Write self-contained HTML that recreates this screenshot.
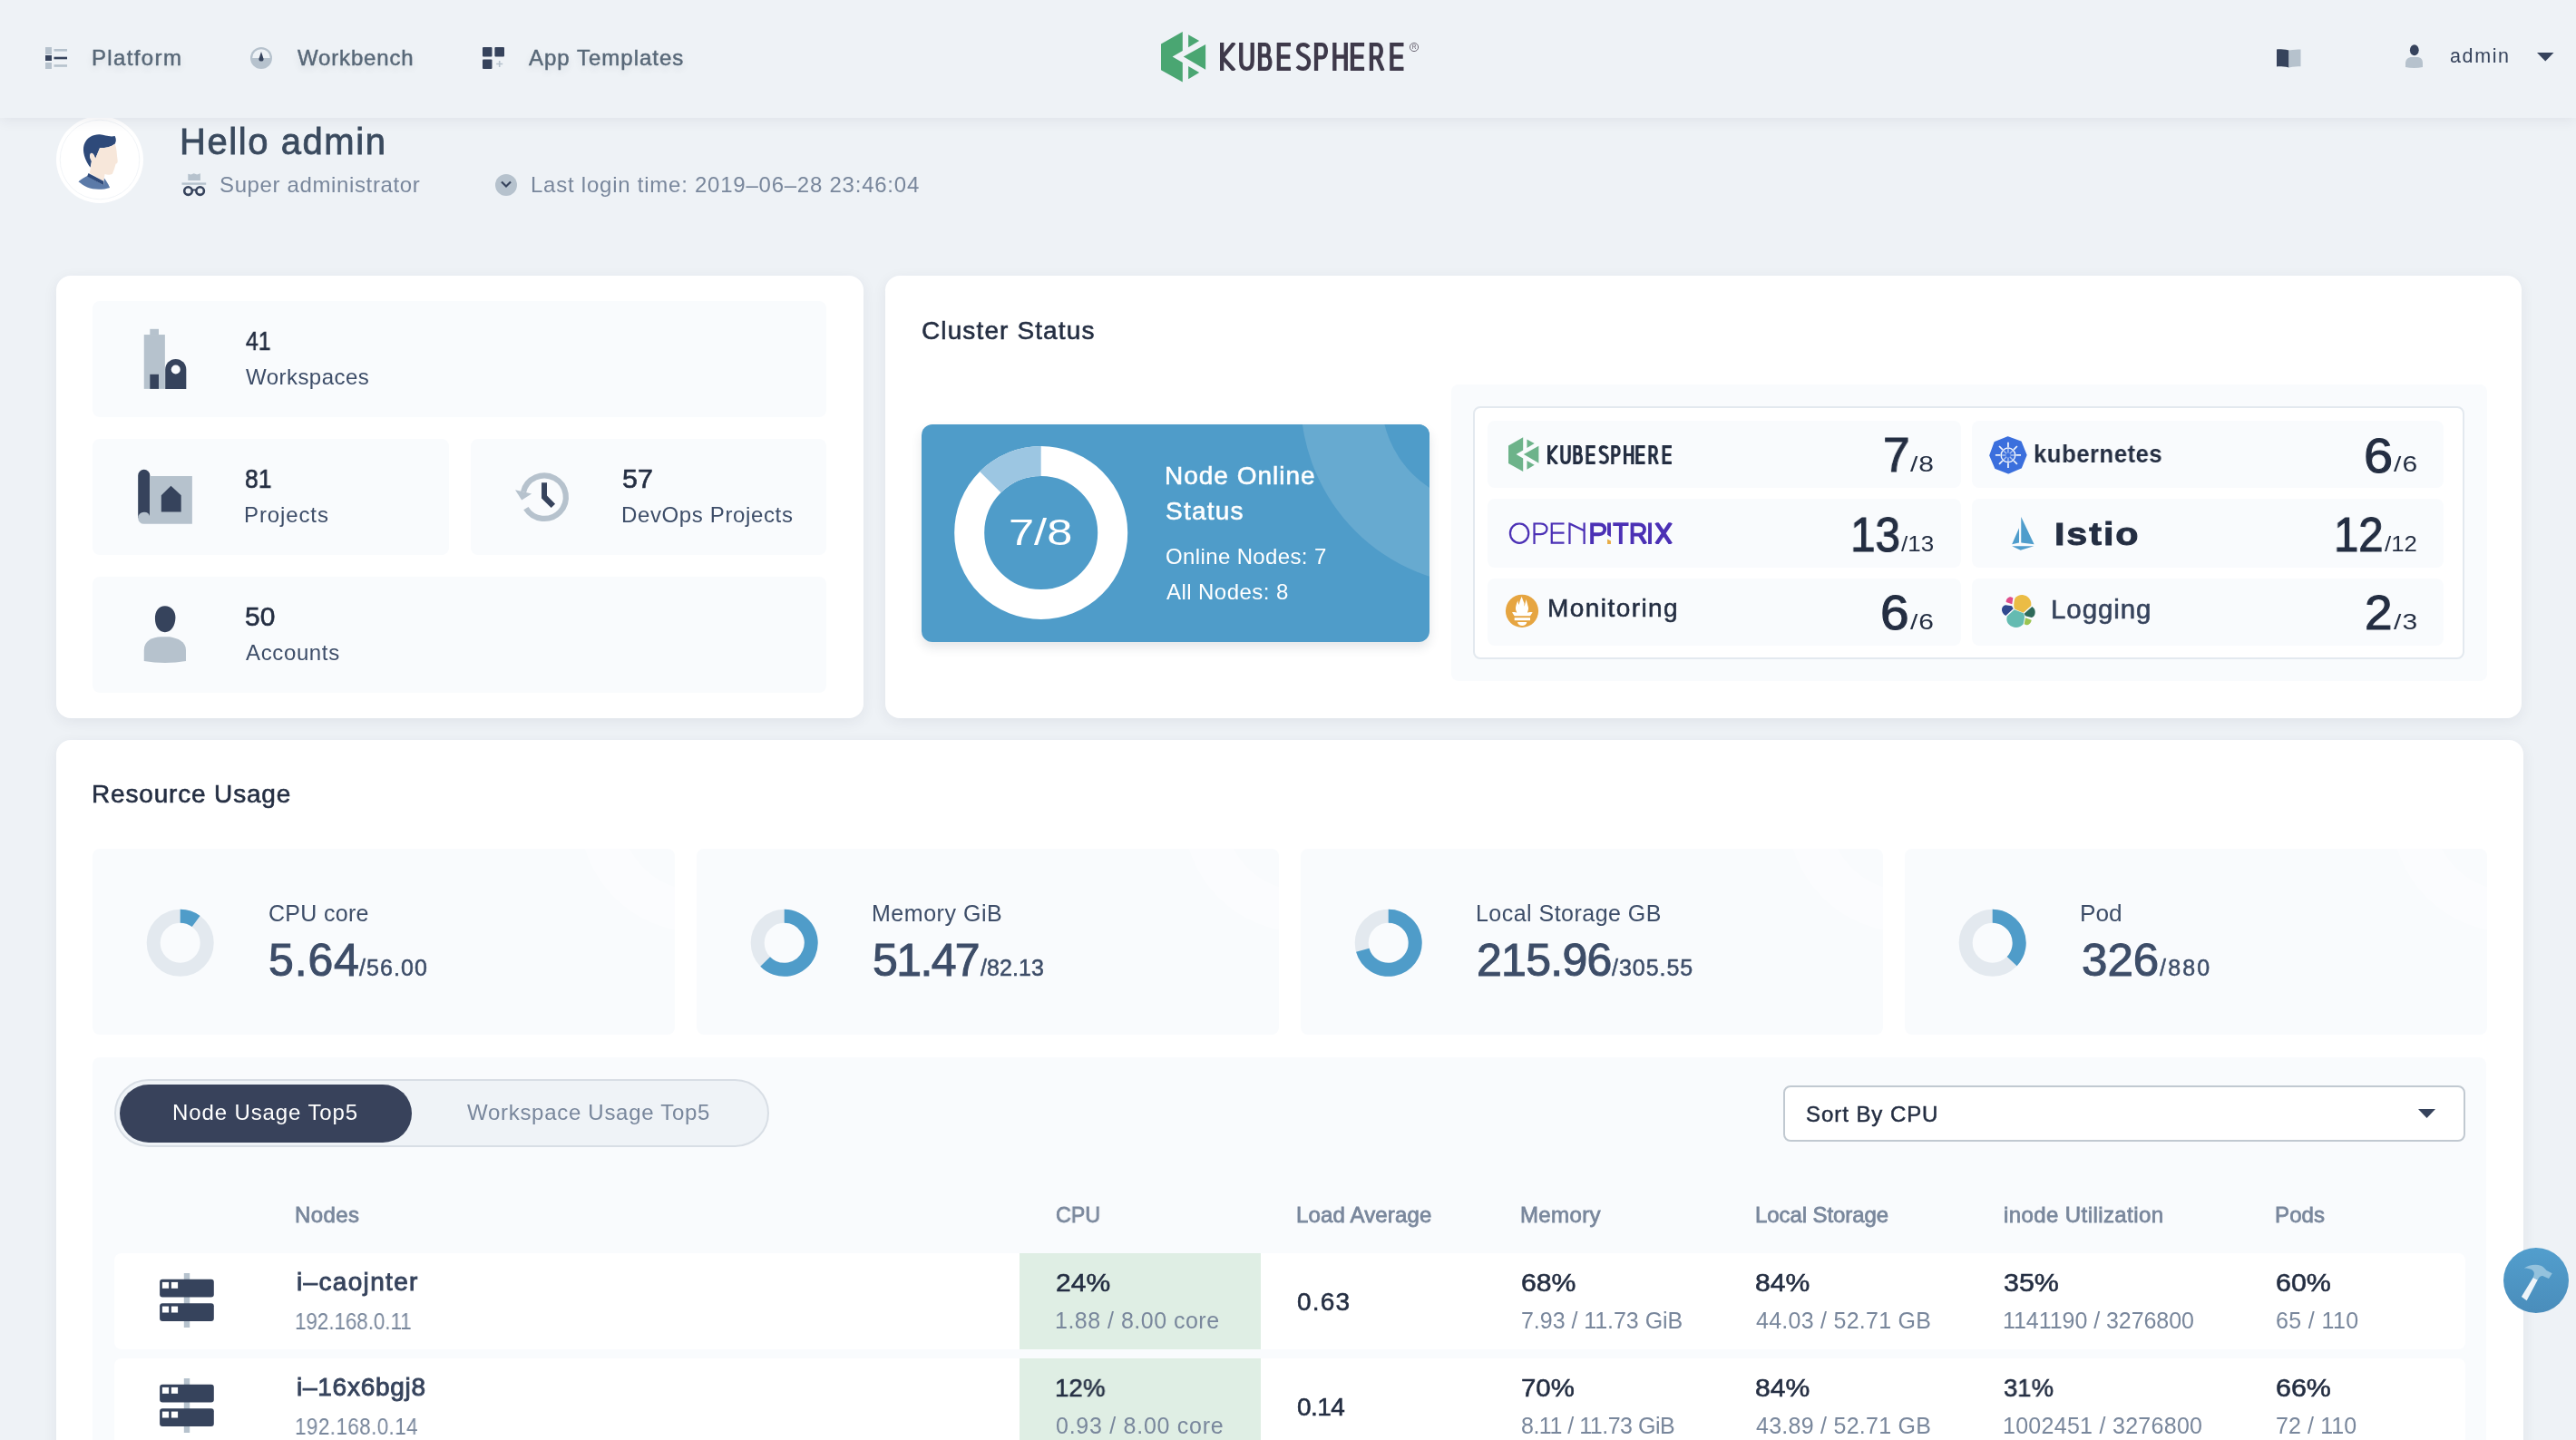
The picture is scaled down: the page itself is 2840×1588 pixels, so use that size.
<!DOCTYPE html>
<html><head><meta charset="utf-8"><style>
html,body{margin:0;padding:0;}
body{width:2840px;height:1588px;overflow:hidden;position:relative;background:#eef2f6;font-family:"Liberation Sans", sans-serif;}
.t{position:absolute;white-space:nowrap;line-height:1;font-family:"Liberation Sans", sans-serif;will-change:transform;}
svg{display:block}
</style></head><body>
<div style="position:absolute;left:0px;top:0px;width:2840px;height:130px;background:#eef2f6;box-shadow:0 3px 14px rgba(36,46,66,0.07);z-index:5"></div>
<svg style="position:absolute;left:50px;top:52px;z-index:6" width="24" height="24" viewBox="0 0 24 24"><rect x="0" y="0" width="7" height="8" fill="#b6c2cd"/><rect x="0" y="9" width="7" height="6" fill="#36435c"/><rect x="0" y="17" width="7" height="7" fill="#b6c2cd"/><rect x="9.5" y="2" width="14.5" height="2.6" fill="#b6c2cd"/><rect x="9.5" y="10.7" width="14.5" height="2.6" fill="#36435c"/><rect x="9.5" y="19.2" width="14.5" height="2.6" fill="#b6c2cd"/></svg>
<div class="t" style="left:100.8px;top:51.5px;font-size:24px;color:#586878;-webkit-text-stroke:0.48px #586878;letter-spacing:1.36px;text-shadow:0 4px 8px rgba(36,46,66,0.12);z-index:6;">Platform</div>
<svg style="position:absolute;left:276px;top:52px;z-index:6" width="24" height="24" viewBox="0 0 24 24"><circle cx="12" cy="12" r="12" fill="#b6c2cd"/><path d="M2.2,12 A9.8,9.8 0 0 1 21.8,12 Z" fill="#eef2f6"/><path d="M12,5 L14.6,12.9 A2.6,2.6 0 1 1 9.4,12.9 Z" fill="#36435c"/></svg>
<div class="t" style="left:327.5px;top:51.5px;font-size:24px;color:#586878;-webkit-text-stroke:0.48px #586878;letter-spacing:0.84px;text-shadow:0 4px 8px rgba(36,46,66,0.12);z-index:6;">Workbench</div>
<svg style="position:absolute;left:532px;top:52px;z-index:6" width="24" height="24" viewBox="0 0 24 24"><rect x="0" y="0" width="10.5" height="10.5" rx="1" fill="#36435c"/><rect x="13.4" y="0" width="10.6" height="10.5" rx="1" fill="#36435c"/><rect x="0" y="13.4" width="10.5" height="10.6" rx="1" fill="#36435c"/><path d="M18.7,15 V22 M15.2,18.5 H22.2" stroke="#b6c2cd" stroke-width="1.6"/></svg>
<div class="t" style="left:583.4px;top:51.5px;font-size:24px;color:#586878;-webkit-text-stroke:0.48px #586878;letter-spacing:1.00px;text-shadow:0 4px 8px rgba(36,46,66,0.12);z-index:6;">App Templates</div>
<svg style="position:absolute;left:1279.9px;top:34.7px;z-index:6" width="50" height="56" viewBox="0 0 50 56"><path d="M23.8,0 L0,13.6 L0,42.2 L23.8,55.5 L23.8,34.1 L12.6,27.5 L23.8,21.1 Z" fill="#4aa672"/><path d="M49.1,13.9 L49.1,41.8 L24.8,27.5 Z" fill="#4aa672"/><path d="M30.1,3.3 L42.2,10.1 L30.1,17.3 Z" fill="#4aa672"/><path d="M30.1,38.1 L42.2,44.9 L30.1,52.3 Z" fill="#4aa672"/></svg>
<svg style="position:absolute;left:1345px;top:46.7px;z-index:6" width="210" height="31" viewBox="0 0 210 31"><path transform="translate(0,0)" d="M2.15,0 V31 M15.8,0 L2.75,16.2 L15.8,31" fill="none" stroke="#3e394a" stroke-width="4.3"/><path transform="translate(21.1,0)" d="M2.15,0 V20.5 C2.15,26 4.5,28.85 8.4,28.85 C12.3,28.85 14.6,26 14.6,20.5 V0" fill="none" stroke="#3e394a" stroke-width="4.3"/><path transform="translate(41.9,0)" d="M2.15,2.15 H8.2 C13.2,2.15 13.2,14.3 8.2,14.3 H2.15 M8.2,14.3 C15.2,14.3 15.2,28.85 8.6,28.85 H2.15 M2.15,0 V31" fill="none" stroke="#3e394a" stroke-width="4.3"/><path transform="translate(62.7,0)" d="M15.3,2.15 H2.15 V28.85 H15.3 M2.15,15.5 H14.5" fill="none" stroke="#3e394a" stroke-width="4.3"/><path transform="translate(83.4,0)" d="M14.3,5.2 C12.8,3 10.8,2.15 8.4,2.15 C4.8,2.15 2.7,4.3 2.7,7.6 C2.7,11.4 5.8,12.8 8.6,14 C12,15.5 14.7,17.3 14.7,21.6 C14.7,26.2 11.6,28.85 8.4,28.85 C5.4,28.85 3.2,27.8 1.8,26" fill="none" stroke="#3e394a" stroke-width="4.3"/><path transform="translate(103.9,0)" d="M2.15,31 V2.15 H8.3 C14.6,2.15 14.6,16.4 8.3,16.4 H2.15" fill="none" stroke="#3e394a" stroke-width="4.3"/><path transform="translate(124.2,0)" d="M2.15,0 V31 M14.6,0 V31 M2.15,15.5 H14.6" fill="none" stroke="#3e394a" stroke-width="4.3"/><path transform="translate(143.8,0)" d="M15.3,2.15 H2.15 V28.85 H15.3 M2.15,15.5 H14.5" fill="none" stroke="#3e394a" stroke-width="4.3"/><path transform="translate(164.8,0)" d="M2.15,31 V2.15 H8.3 C14.6,2.15 14.6,16.4 8.3,16.4 H2.15 M8.6,16.4 L14.8,31" fill="none" stroke="#3e394a" stroke-width="4.3"/><path transform="translate(187.2,0)" d="M15.3,2.15 H2.15 V28.85 H15.3 M2.15,15.5 H14.5" fill="none" stroke="#3e394a" stroke-width="4.3"/></svg>
<svg style="position:absolute;left:1553px;top:46px;z-index:6" width="12" height="12" viewBox="0 0 12 12"><circle cx="6" cy="6" r="4.6" fill="none" stroke="#5d5866" stroke-width="0.9"/><text x="6" y="8.3" font-size="6.5" text-anchor="middle" fill="#5d5866" font-family="Liberation Sans">R</text></svg>
<svg style="position:absolute;left:2510px;top:54px;z-index:6" width="28" height="21" viewBox="0 0 28 21"><path d="M0,0.5 C3,0.2 7,0.4 13.5,1.5 V20.5 C7,19.3 3,19.2 0,19.5 Z" fill="#36435c"/><path d="M13.5,1.5 C19,0.8 23,0.6 26.5,0.6 V19.2 C23,19.2 19,19.3 13.5,20.5 Z" fill="#b6c2cd"/></svg>
<svg style="position:absolute;left:2652px;top:49px;z-index:6" width="20" height="26" viewBox="0 0 20 26"><ellipse cx="9.8" cy="6.2" rx="4.9" ry="6" fill="#36435c"/><path d="M0,21 C0,16.5 3,14 7,14 H12.5 C17,14 19,16.5 19,21 V25 C13,26.2 6,26.2 0,25 Z" fill="#b6c2cd"/></svg>
<div class="t" style="left:2701.0px;top:51.9px;font-size:21.5px;color:#36435c;letter-spacing:1.62px;z-index:6;">admin</div>
<svg style="position:absolute;left:2797px;top:57.5px;z-index:6" width="19" height="10" viewBox="0 0 19 10"><path d="M0,0 H18.5 L9.25,9.5 Z" fill="#36435c"/></svg>
<div style="position:absolute;left:62px;top:128px;width:96px;height:96px;border-radius:50%;background:#fff"></div>
<svg style="position:absolute;left:62px;top:128px;" width="96" height="96" viewBox="0 0 96 96"><circle cx="48" cy="48" r="43.8" fill="none" stroke="#eef1f5" stroke-width="0.8"/></svg>
<svg style="position:absolute;left:60px;top:125px;" width="100" height="100" viewBox="0 0 1440 1440"><path d="M570,860 C480,740 440,600 470,500 C510,380 620,330 720,335 C800,340 870,380 960,360 C985,410 980,450 960,485 C900,530 820,550 720,550 L650,720 C620,640 590,610 570,640 C550,680 570,720 590,760 Z" fill="#2e4a7a"/><path d="M720,550 C820,550 900,530 960,485 C990,560 985,600 1000,720 C1010,780 1000,795 975,800 C960,850 950,900 920,960 C880,985 830,975 800,965 L780,1080 L560,950 L590,760 C570,720 555,680 575,640 C595,610 630,640 650,720 Z" fill="#f7e7da"/><path d="M380,1085 C440,1040 490,1010 520,995 L780,1140 L790,1030 C830,1080 870,1150 880,1180 C760,1220 620,1215 520,1175 C460,1145 420,1115 380,1085 Z" fill="#5b7aa8"/><path d="M540,950 L780,1075 L780,1140 L520,1000 Z" fill="#2e4a7a"/></svg>
<div class="t" style="left:197.5px;top:136.0px;font-size:40px;color:#3a4a5e;-webkit-text-stroke:0.80px #3a4a5e;letter-spacing:1.57px;">Hello admin</div>
<svg style="position:absolute;left:200px;top:190px;" width="28" height="27" viewBox="0 0 28 27"><path d="M7.3,1.8 L10.5,2.6 L13.8,1.2 L17.2,2.6 L20.9,1.2 V9.1 H7.3 Z" fill="#b6c2cd"/><rect x="0.5" y="11.4" width="26.7" height="2.4" fill="#b6c2cd"/><circle cx="7.5" cy="20.6" r="4.3" fill="none" stroke="#36435c" stroke-width="2.6"/><circle cx="20.6" cy="20.6" r="4.3" fill="none" stroke="#36435c" stroke-width="2.6"/><path d="M11.5,19.5 H16.5" stroke="#36435c" stroke-width="2"/></svg>
<div class="t" style="left:241.9px;top:191.6px;font-size:24px;color:#79879c;letter-spacing:0.63px;">Super administrator</div>
<svg style="position:absolute;left:546px;top:192px;" width="24" height="24" viewBox="0 0 24 24"><circle cx="12" cy="12" r="12" fill="#b6c2cd"/><path d="M7,8.5 L12,13.5 L17,8.5" fill="none" stroke="#36435c" stroke-width="2.2"/></svg>
<div class="t" style="left:585.0px;top:191.6px;font-size:24px;color:#79879c;letter-spacing:0.76px;">Last login time: 2019–06–28 23:46:04</div>
<div style="position:absolute;left:62px;top:304px;width:890px;height:488px;background:#fff;border-radius:16px;box-shadow:0 4px 16px rgba(36,46,66,0.07)"></div>
<div style="position:absolute;left:102px;top:332px;width:809px;height:128px;background:#f9fbfd;border-radius:8px"></div>
<div style="position:absolute;left:102px;top:484px;width:393px;height:128px;background:#f9fbfd;border-radius:8px"></div>
<div style="position:absolute;left:519px;top:484px;width:392px;height:128px;background:#f9fbfd;border-radius:8px"></div>
<div style="position:absolute;left:102px;top:636px;width:809px;height:128px;background:#f9fbfd;border-radius:8px"></div>
<svg style="position:absolute;left:140px;top:350px;" width="90" height="90" viewBox="0 0 1440 1440"><rect x="300" y="305" width="370" height="957" fill="#b6c2cd"/><rect x="405" y="205" width="155" height="110" fill="#b6c2cd"/><rect x="405" y="1005" width="155" height="257" fill="#36435c"/><path d="M675,1262 V920 A185,185 0 0 1 1045,920 V1262 Z" fill="#36435c"/><circle cx="860" cy="920" r="80" fill="#f9fbfd"/></svg>
<svg style="position:absolute;left:140px;top:505px;" width="90" height="90" viewBox="0 0 1440 1440"><path d="M195,310 A105,105 0 0 1 405,310 V1060 H195 Z" fill="#36435c"/><path d="M400,320 H1150 V1165 H300 A105,105 0 0 1 300,955 A105,105 0 0 1 405,1040 V320 Z" fill="#b6c2cd"/><path d="M605,660 L775,490 L955,660 V950 H605 Z" fill="#36435c"/></svg>
<svg style="position:absolute;left:553px;top:505px;" width="90" height="90" viewBox="0 0 1440 1440"><path d="M385,600 A380,380 0 1 1 430,890" fill="none" stroke="#b6c2cd" stroke-width="100"/><path d="M240,565 L530,630 L355,745 Z" fill="#b6c2cd"/><path d="M705,435 H800 V665 L945,810 L875,880 L705,710 Z" fill="#36435c"/></svg>
<svg style="position:absolute;left:140px;top:655px;" width="90" height="90" viewBox="0 0 1440 1440"><path d="M670,210 C780,210 860,300 855,420 C850,560 780,675 670,675 C560,675 495,560 495,440 C490,300 560,210 670,210 Z" fill="#36435c"/><path d="M300,990 C300,820 450,760 600,755 H750 C900,780 1040,840 1040,990 V1185 C800,1225 540,1225 300,1185 Z" fill="#b6c2cd"/></svg>
<div class="t" style="left:270.5px;top:361.7px;font-size:29px;color:#242e42;-webkit-text-stroke:0.58px #242e42;transform:scaleX(0.852);transform-origin:0 0;">41</div>
<div class="t" style="left:270.5px;top:403.6px;font-size:24px;color:#3d4d68;letter-spacing:0.46px;">Workspaces</div>
<div class="t" style="left:269.6px;top:513.6px;font-size:29px;color:#242e42;-webkit-text-stroke:0.58px #242e42;transform:scaleX(0.913);transform-origin:0 0;">81</div>
<div class="t" style="left:268.5px;top:555.6px;font-size:24px;color:#3d4d68;letter-spacing:0.89px;">Projects</div>
<div class="t" style="left:686.1px;top:513.6px;font-size:29px;color:#242e42;-webkit-text-stroke:0.58px #242e42;transform:scaleX(1.050);transform-origin:0 0;">57</div>
<div class="t" style="left:685.1px;top:555.6px;font-size:24px;color:#3d4d68;letter-spacing:0.63px;">DevOps Projects</div>
<div class="t" style="left:269.5px;top:665.6px;font-size:29px;color:#242e42;-webkit-text-stroke:0.58px #242e42;transform:scaleX(1.032);transform-origin:0 0;">50</div>
<div class="t" style="left:270.5px;top:707.6px;font-size:24px;color:#3d4d68;letter-spacing:0.63px;">Accounts</div>
<div style="position:absolute;left:976px;top:304px;width:1804px;height:488px;background:#fff;border-radius:16px;box-shadow:0 4px 16px rgba(36,46,66,0.07)"></div>
<div class="t" style="left:1016.4px;top:351.2px;font-size:28px;color:#242e42;-webkit-text-stroke:0.56px #242e42;letter-spacing:1.12px;">Cluster Status</div>
<div style="position:absolute;left:1016px;top:468px;width:560px;height:240px;border-radius:12px;background:#4f9cc9;overflow:hidden;box-shadow:0 6px 12px rgba(36,46,66,0.12)"><div style="position:absolute;left:418px;top:-234px;width:412px;height:412px;border-radius:50%;background:rgba(255,255,255,0.14)"></div><div style="position:absolute;left:507px;top:-145px;width:234px;height:234px;border-radius:50%;background:#4f9cc9"></div></div>
<svg style="position:absolute;left:1016px;top:468px;" width="560" height="240" viewBox="0 0 560 240"><circle cx="131.7" cy="119.5" r="79" fill="none" stroke="#fff" stroke-width="33"/><path d="M131.7,40.5 A79,79 0 0 0 75.8,63.6" fill="none" stroke="#9cc6e2" stroke-width="33"/></svg>
<div class="t" style="left:1112.2px;top:566.8px;font-size:41px;color:#fff;transform:scaleX(1.232);transform-origin:0 0;">7/8</div>
<div class="t" style="left:1283.8px;top:510.5px;font-size:28px;color:#fff;-webkit-text-stroke:0.56px #fff;letter-spacing:0.99px;">Node Online</div>
<div class="t" style="left:1284.8px;top:549.5px;font-size:28px;color:#fff;-webkit-text-stroke:0.56px #fff;letter-spacing:1.24px;">Status</div>
<div class="t" style="left:1284.8px;top:601.6px;font-size:24px;color:#fff;letter-spacing:0.37px;">Online Nodes: 7</div>
<div class="t" style="left:1285.8px;top:641.4px;font-size:24px;color:#fff;letter-spacing:0.44px;">All Nodes: 8</div>
<div style="position:absolute;left:1600px;top:424px;width:1142px;height:327px;background:#f9fbfd;border-radius:8px"></div>
<div style="position:absolute;left:1624px;top:448px;width:1093px;height:279px;background:#fff;border:2px solid #e3e9ef;border-radius:8px;box-sizing:border-box"></div>
<div style="position:absolute;left:1640px;top:464px;width:522px;height:74px;background:#f9fbfd;border-radius:8px"></div>
<div style="position:absolute;left:2174px;top:464px;width:520px;height:74px;background:#f9fbfd;border-radius:8px"></div>
<div style="position:absolute;left:1640px;top:550px;width:522px;height:76px;background:#f9fbfd;border-radius:8px"></div>
<div style="position:absolute;left:2174px;top:550px;width:520px;height:76px;background:#f9fbfd;border-radius:8px"></div>
<div style="position:absolute;left:1640px;top:638px;width:522px;height:74px;background:#f9fbfd;border-radius:8px"></div>
<div style="position:absolute;left:2174px;top:638px;width:520px;height:74px;background:#f9fbfd;border-radius:8px"></div>
<div class="t" style="left:2075.7px;top:474.4px;font-size:54px;color:#242e42;-webkit-text-stroke:1.08px #242e42;transform:scaleX(0.985);transform-origin:0 0;">7</div>
<div class="t" style="left:2106.0px;top:499.9px;font-size:24px;color:#242e42;letter-spacing:0.76px;transform:scaleX(1.250);transform-origin:0 0;">/8</div>
<div class="t" style="left:2040.2px;top:562.1px;font-size:54px;color:#242e42;-webkit-text-stroke:1.08px #242e42;transform:scaleX(0.917);transform-origin:0 0;">13</div>
<div class="t" style="left:2096.0px;top:587.6px;font-size:24px;color:#242e42;transform:scaleX(1.084);transform-origin:0 0;">/13</div>
<div class="t" style="left:2073.4px;top:648.1px;font-size:54px;color:#242e42;-webkit-text-stroke:1.08px #242e42;transform:scaleX(1.054);transform-origin:0 0;">6</div>
<div class="t" style="left:2106.0px;top:673.6px;font-size:24px;color:#242e42;letter-spacing:0.76px;transform:scaleX(1.250);transform-origin:0 0;">/6</div>
<div class="t" style="left:2605.6px;top:474.8px;font-size:54px;color:#242e42;-webkit-text-stroke:1.08px #242e42;transform:scaleX(1.069);transform-origin:0 0;">6</div>
<div class="t" style="left:2638.5px;top:500.3px;font-size:24px;color:#242e42;letter-spacing:0.84px;transform:scaleX(1.250);transform-origin:0 0;">/6</div>
<div class="t" style="left:2572.9px;top:562.1px;font-size:54px;color:#242e42;-webkit-text-stroke:1.08px #242e42;transform:scaleX(0.909);transform-origin:0 0;">12</div>
<div class="t" style="left:2629.0px;top:587.6px;font-size:24px;color:#242e42;transform:scaleX(1.072);transform-origin:0 0;">/12</div>
<div class="t" style="left:2607.0px;top:648.1px;font-size:54px;color:#242e42;-webkit-text-stroke:1.08px #242e42;transform:scaleX(1.019);transform-origin:0 0;">2</div>
<div class="t" style="left:2638.5px;top:673.6px;font-size:24px;color:#242e42;letter-spacing:0.84px;transform:scaleX(1.250);transform-origin:0 0;">/3</div>
<svg style="position:absolute;left:1663px;top:482px;" width="34" height="38.5" viewBox="0 0 50 56"><path d="M23.8,0 L0,13.6 L0,42.2 L23.8,55.5 L23.8,34.1 L12.6,27.5 L23.8,21.1 Z" fill="#6db38a"/><path d="M49.1,13.9 L49.1,41.8 L24.8,27.5 Z" fill="#6db38a"/><path d="M30.1,3.3 L42.2,10.1 L30.1,17.3 Z" fill="#6db38a"/><path d="M30.1,38.1 L42.2,44.9 L30.1,52.3 Z" fill="#6db38a"/></svg>
<svg style="position:absolute;left:1705.5px;top:491px;" width="142" height="21" viewBox="0 0 210 31"><path transform="translate(0,0)" d="M2.4,0 V31 M15.8,0 L3.0,16.2 L15.8,31" fill="none" stroke="#242e42" stroke-width="4.8"/><path transform="translate(21.1,0)" d="M2.4,0 V20.5 C2.4,26 4.5,28.6 8.4,28.6 C12.3,28.6 14.6,26 14.6,20.5 V0" fill="none" stroke="#242e42" stroke-width="4.8"/><path transform="translate(41.9,0)" d="M2.4,2.4 H8.2 C13.2,2.4 13.2,14.3 8.2,14.3 H2.4 M8.2,14.3 C15.2,14.3 15.2,28.6 8.6,28.6 H2.4 M2.4,0 V31" fill="none" stroke="#242e42" stroke-width="4.8"/><path transform="translate(62.7,0)" d="M15.3,2.4 H2.4 V28.6 H15.3 M2.4,15.5 H14.5" fill="none" stroke="#242e42" stroke-width="4.8"/><path transform="translate(83.4,0)" d="M14.3,5.2 C12.8,3 10.8,2.4 8.4,2.4 C4.8,2.4 2.7,4.3 2.7,7.6 C2.7,11.4 5.8,12.8 8.6,14 C12,15.5 14.7,17.3 14.7,21.6 C14.7,26.2 11.6,28.6 8.4,28.6 C5.4,28.6 3.2,27.8 1.8,26" fill="none" stroke="#242e42" stroke-width="4.8"/><path transform="translate(103.9,0)" d="M2.4,31 V2.4 H8.3 C14.6,2.4 14.6,16.4 8.3,16.4 H2.4" fill="none" stroke="#242e42" stroke-width="4.8"/><path transform="translate(124.2,0)" d="M2.4,0 V31 M14.6,0 V31 M2.4,15.5 H14.6" fill="none" stroke="#242e42" stroke-width="4.8"/><path transform="translate(143.8,0)" d="M15.3,2.4 H2.4 V28.6 H15.3 M2.4,15.5 H14.5" fill="none" stroke="#242e42" stroke-width="4.8"/><path transform="translate(164.8,0)" d="M2.4,31 V2.4 H8.3 C14.6,2.4 14.6,16.4 8.3,16.4 H2.4 M8.6,16.4 L14.8,31" fill="none" stroke="#242e42" stroke-width="4.8"/><path transform="translate(187.2,0)" d="M15.3,2.4 H2.4 V28.6 H15.3 M2.4,15.5 H14.5" fill="none" stroke="#242e42" stroke-width="4.8"/></svg>
<svg style="position:absolute;left:1655px;top:565px" width="200" height="45" viewBox="0 0 2576 580"><defs><clipPath id="opc"><rect x="0" y="145" width="2576" height="305"/></clipPath></defs><g clip-path="url(#opc)"><g fill="none" stroke="#4b30b5" stroke-width="29"><ellipse cx="258" cy="297" rx="131" ry="138"/><path d="M470,450 V160 H560 C620,160 650,200 650,235 C650,275 615,310 560,310 H470"/><path d="M895,160 H718 V433 H895 M718,293 H895"/><path d="M972,450 V160 L1180,262 M1180,145 V450"/></g><g fill="none" stroke="#4b30b5" stroke-width="50"><path d="M1290,450 V170 H1390 C1450,170 1472,205 1472,240 C1472,280 1442,312 1390,312 H1290"/><path d="M1588,168 H1810 M1698,145 V450"/><path d="M1862,450 V170 H1950 C2010,170 2036,205 2036,242 C2036,290 2000,318 1950,318 H1862"/><path d="M2113,145 V450"/></g><path d="M1960,300 L2050,450" stroke="#4b30b5" stroke-width="56"/><path d="M2205,145 L2410,450 M2410,145 L2205,450" stroke="#4b30b5" stroke-width="56"/><path d="M1508,145 H1558 V350 L1508,320 Z" fill="#4b30b5"/><path d="M1508,380 L1558,405 V450 H1508 Z" fill="#e8ac45"/></g></svg>
<svg style="position:absolute;left:1655px;top:650px;" width="45" height="48" viewBox="0 0 1350 1440"><circle cx="690" cy="715" r="543" fill="#e6a541"/><path d="M680,240 C700,300 730,380 760,440 C770,470 760,520 770,560 C790,500 800,420 830,330 C850,420 880,520 900,600 C910,660 880,720 870,770 C910,750 980,750 1040,760 L960,880 L440,880 L360,760 C420,750 480,750 520,770 C500,720 470,660 480,600 C490,520 530,430 550,370 C560,430 570,480 590,510 C600,430 640,330 680,240 Z" fill="#fff"/><rect x="440" y="935" width="520" height="90" fill="#fff"/><path d="M540,1080 H850 C840,1160 770,1200 695,1200 C620,1200 550,1160 540,1080 Z" fill="#fff"/></svg>
<div class="t" style="left:1706.0px;top:657.2px;font-size:28px;color:#242e42;-webkit-text-stroke:0.56px #242e42;letter-spacing:1.44px;">Monitoring</div>
<svg style="position:absolute;left:2185px;top:475px;" width="60" height="55" viewBox="0 0 1571 1440"><path d="M750,185 L1125,320 L1280,700 L1130,1070 L765,1225 L390,1080 L235,715 L375,330 Z" fill="#3b6fdd" stroke="#3b6fdd" stroke-width="40" stroke-linejoin="round"/><circle cx="758" cy="705" r="205" fill="none" stroke="#eef3fb" stroke-width="38"/><path d="M758,480 L758,337 M917,546 L1018,445 M983,705 L1126,705 M917,864 L1018,965 M758,930 L758,1073 M599,864 L498,965 M533,705 L390,705 M599,546 L498,445 " stroke="#eef3fb" stroke-width="46"/><path d="M758,640 L758,520 M804,659 L889,574 M823,705 L943,705 M804,751 L889,836 M758,770 L758,890 M712,751 L627,836 M693,705 L573,705 M712,659 L627,574 " stroke="#eef3fb" stroke-opacity="0.6" stroke-width="40"/></svg>
<div class="t" style="left:2241.8px;top:488.4px;font-size:27px;color:#242e42;font-weight:bold;letter-spacing:0.56px;transform:scaleX(0.950);transform-origin:0 0;">kubernetes</div>
<svg style="position:absolute;left:2210px;top:565px;" width="40" height="47" viewBox="0 0 1226 1440"><path d="M560,150 L1000,1080 L560,1030 Z" fill="#4f9dcc"/><path d="M490,530 L490,1030 L250,1080 Z" fill="#4f9dcc"/><path d="M250,1140 L990,1140 L540,1280 Z" fill="#4f9dcc"/></svg>
<div class="t" style="left:2264.6px;top:570.8px;font-size:35px;color:#242e42;font-weight:bold;letter-spacing:1.61px;transform:scaleX(1.180);transform-origin:0 0;-webkit-text-stroke:0.9px #242e42;">Istio</div>
<svg style="position:absolute;left:2200px;top:650px;" width="50" height="48" viewBox="0 0 1500 1440"><path d="M350,420 C340,330 420,250 500,250 L580,280 L550,490 Z" fill="#df4d8b"/><path d="M640,300 C700,200 820,170 900,180 C1050,200 1180,320 1180,480 L1180,540 L920,770 L640,650 C600,600 600,500 620,380 Z" fill="#ebbc45"/><path d="M330,520 L540,550 L590,640 L340,870 C240,810 200,720 210,650 C220,580 270,530 330,520 Z" fill="#30498f"/><path d="M620,670 L930,790 C960,850 970,920 950,1000 L920,1150 C860,1220 770,1260 680,1260 C500,1250 370,1120 370,990 L380,890 Z" fill="#64bbb1"/><path d="M1210,570 C1290,620 1320,700 1310,780 C1300,870 1250,920 1190,930 L990,880 L950,800 Z" fill="#2e6a5a"/><path d="M990,940 L1190,1010 C1180,1110 1100,1180 1020,1180 L950,1150 Z" fill="#9bc451"/></svg>
<div class="t" style="left:2261.0px;top:657.4px;font-size:29.5px;color:#36435c;-webkit-text-stroke:0.59px #36435c;letter-spacing:0.92px;">Logging</div>
<div style="position:absolute;left:62px;top:816px;width:2720px;height:900px;background:#fff;border-radius:16px;box-shadow:0 4px 16px rgba(36,46,66,0.07)"></div>
<div class="t" style="left:100.8px;top:862.4px;font-size:28px;color:#242e42;-webkit-text-stroke:0.56px #242e42;letter-spacing:0.83px;">Resource Usage</div>
<div style="position:absolute;left:102px;top:936px;width:642px;height:205px;background:#f9fbfd;border-radius:8px"></div>
<div style="position:absolute;left:102px;top:936px;width:642px;height:205px;border-radius:8px;overflow:hidden"><div style="position:absolute;left:537px;top:-169px;width:261px;height:261px;border-radius:50%;box-sizing:border-box;border:46px solid rgba(255,255,255,0.35)"></div></div>
<svg style="position:absolute;left:142px;top:980px;" width="120" height="120" viewBox="142 980 120 120"><circle cx="198.7" cy="1039.8" r="29.5" fill="none" stroke="#e3e9ef" stroke-width="15"/><path d="M198.7,1010.3 A29.5,29.5 0 0 1 216.15,1016.01" fill="none" stroke="#4f9cc9" stroke-width="15"/></svg>
<div class="t" style="left:295.8px;top:994.8px;font-size:25px;color:#3d4d68;letter-spacing:0.30px;">CPU core</div>
<div class="t" style="left:295.8px;top:1033.7px;font-size:50px;color:#3d4d68;-webkit-text-stroke:1.00px #3d4d68;letter-spacing:0.87px;">5.64</div>
<div class="t" style="left:396.4px;top:1055.0px;font-size:25px;color:#3d4d68;-webkit-text-stroke:0.50px #3d4d68;letter-spacing:1.10px;">/56.00</div>
<div style="position:absolute;left:768px;top:936px;width:642px;height:205px;background:#f9fbfd;border-radius:8px"></div>
<div style="position:absolute;left:768px;top:936px;width:642px;height:205px;border-radius:8px;overflow:hidden"><div style="position:absolute;left:537px;top:-169px;width:261px;height:261px;border-radius:50%;box-sizing:border-box;border:46px solid rgba(255,255,255,0.35)"></div></div>
<svg style="position:absolute;left:808px;top:980px;" width="120" height="120" viewBox="808 980 120 120"><circle cx="864.7" cy="1039.8" r="29.5" fill="none" stroke="#e3e9ef" stroke-width="15"/><path d="M864.7,1010.3 A29.5,29.5 0 1 1 843.62,1060.44" fill="none" stroke="#4f9cc9" stroke-width="15"/></svg>
<div class="t" style="left:960.8px;top:994.8px;font-size:25px;color:#3d4d68;letter-spacing:0.53px;">Memory GiB</div>
<div class="t" style="left:961.8px;top:1033.7px;font-size:50px;color:#3d4d68;-webkit-text-stroke:1.00px #3d4d68;letter-spacing:-1.62px;">51.47</div>
<div class="t" style="left:1080.7px;top:1055.0px;font-size:25px;color:#3d4d68;-webkit-text-stroke:0.50px #3d4d68;letter-spacing:0.06px;">/82.13</div>
<div style="position:absolute;left:1434px;top:936px;width:642px;height:205px;background:#f9fbfd;border-radius:8px"></div>
<div style="position:absolute;left:1434px;top:936px;width:642px;height:205px;border-radius:8px;overflow:hidden"><div style="position:absolute;left:537px;top:-169px;width:261px;height:261px;border-radius:50%;box-sizing:border-box;border:46px solid rgba(255,255,255,0.35)"></div></div>
<svg style="position:absolute;left:1474px;top:980px;" width="120" height="120" viewBox="1474 980 120 120"><circle cx="1530.7" cy="1039.8" r="29.5" fill="none" stroke="#e3e9ef" stroke-width="15"/><path d="M1530.7,1010.3 A29.5,29.5 0 1 1 1502.28,1047.71" fill="none" stroke="#4f9cc9" stroke-width="15"/></svg>
<div class="t" style="left:1626.8px;top:994.8px;font-size:25px;color:#3d4d68;letter-spacing:0.47px;">Local Storage GB</div>
<div class="t" style="left:1627.8px;top:1033.7px;font-size:50px;color:#3d4d68;-webkit-text-stroke:1.00px #3d4d68;letter-spacing:-0.70px;">215.96</div>
<div class="t" style="left:1777.0px;top:1055.0px;font-size:25px;color:#3d4d68;-webkit-text-stroke:0.50px #3d4d68;letter-spacing:0.97px;">/305.55</div>
<div style="position:absolute;left:2100px;top:936px;width:642px;height:205px;background:#f9fbfd;border-radius:8px"></div>
<div style="position:absolute;left:2100px;top:936px;width:642px;height:205px;border-radius:8px;overflow:hidden"><div style="position:absolute;left:537px;top:-169px;width:261px;height:261px;border-radius:50%;box-sizing:border-box;border:46px solid rgba(255,255,255,0.35)"></div></div>
<svg style="position:absolute;left:2140px;top:980px;" width="120" height="120" viewBox="2140 980 120 120"><circle cx="2196.7" cy="1039.8" r="29.5" fill="none" stroke="#e3e9ef" stroke-width="15"/><path d="M2196.7,1010.3 A29.5,29.5 0 0 1 2218.15,1060.06" fill="none" stroke="#4f9cc9" stroke-width="15"/></svg>
<div class="t" style="left:2292.7px;top:994.8px;font-size:25px;color:#3d4d68;transform:scaleX(1.049);transform-origin:0 0;">Pod</div>
<div class="t" style="left:2294.8px;top:1033.7px;font-size:50px;color:#3d4d68;-webkit-text-stroke:1.00px #3d4d68;transform:scaleX(1.021);transform-origin:0 0;">326</div>
<div class="t" style="left:2381.0px;top:1055.0px;font-size:25px;color:#3d4d68;-webkit-text-stroke:0.50px #3d4d68;letter-spacing:2.20px;">/880</div>
<div style="position:absolute;left:102px;top:1166px;width:2639px;height:600px;background:#f9fbfd;border-radius:8px"></div>
<div style="position:absolute;left:126px;top:1190px;width:722px;height:75px;background:#eff3f7;border:2px solid #d8dee5;border-radius:38px;box-sizing:border-box"></div>
<div style="position:absolute;left:132px;top:1196px;width:322px;height:64px;background:#38425b;border-radius:32px"></div>
<div class="t" style="left:190.0px;top:1215.4px;font-size:24px;color:#fff;letter-spacing:0.89px;">Node Usage Top5</div>
<div class="t" style="left:514.5px;top:1215.4px;font-size:24px;color:#79879c;letter-spacing:0.71px;">Workspace Usage Top5</div>
<div style="position:absolute;left:1966px;top:1197px;width:752px;height:62px;background:#fff;border:2px solid #c1c9d1;border-radius:8px;box-sizing:border-box"></div>
<div class="t" style="left:1991.0px;top:1216.5px;font-size:24px;color:#242e42;-webkit-text-stroke:0.48px #242e42;letter-spacing:0.94px;">Sort By CPU</div>
<svg style="position:absolute;left:2666px;top:1223px;" width="19" height="10" viewBox="0 0 19 10"><path d="M0,0 H19 L9.5,10 Z" fill="#36435c"/></svg>
<div class="t" style="left:324.5px;top:1328.3px;font-size:24px;color:#79879c;-webkit-text-stroke:0.77px #79879c;letter-spacing:0.38px;">Nodes</div>
<div class="t" style="left:1163.6px;top:1328.3px;font-size:24px;color:#79879c;-webkit-text-stroke:0.77px #79879c;transform:scaleX(0.971);transform-origin:0 0;">CPU</div>
<div class="t" style="left:1428.7px;top:1328.3px;font-size:24px;color:#79879c;-webkit-text-stroke:0.77px #79879c;letter-spacing:0.15px;">Load Average</div>
<div class="t" style="left:1676.3px;top:1328.3px;font-size:24px;color:#79879c;-webkit-text-stroke:0.77px #79879c;letter-spacing:0.38px;">Memory</div>
<div class="t" style="left:1934.5px;top:1328.3px;font-size:24px;color:#79879c;-webkit-text-stroke:0.77px #79879c;letter-spacing:-0.09px;">Local Storage</div>
<div class="t" style="left:2209.0px;top:1328.3px;font-size:24px;color:#79879c;-webkit-text-stroke:0.77px #79879c;letter-spacing:0.41px;">inode Utilization</div>
<div class="t" style="left:2508.0px;top:1328.3px;font-size:24px;color:#79879c;-webkit-text-stroke:0.77px #79879c;letter-spacing:0.13px;">Pods</div>
<div style="position:absolute;left:126px;top:1382px;width:2592px;height:106px;background:#fff;border-radius:8px"></div>
<div style="position:absolute;left:1124px;top:1382px;width:266px;height:106px;background:#dfeee4"></div>
<svg style="position:absolute;left:176px;top:1404px;" width="60" height="60" viewBox="0 0 60 60"><rect x="26.8" y="0" width="6.4" height="60" fill="#b6c2cd"/><rect x="0.1" y="6.8" width="59.7" height="19.8" rx="3" fill="#36435c"/><rect x="0.1" y="33.2" width="59.7" height="19.7" rx="3" fill="#36435c"/><rect x="2.9" y="9.9" width="7.2" height="6.9" fill="#fff"/><rect x="12.9" y="9.9" width="7.2" height="6.9" fill="#fff"/><rect x="2.9" y="36.6" width="7.2" height="6.9" fill="#fff"/><rect x="12.9" y="36.6" width="7.2" height="6.9" fill="#fff"/></svg>
<div class="t" style="left:326.8px;top:1400.2px;font-size:28px;color:#36435c;-webkit-text-stroke:0.90px #36435c;letter-spacing:1.33px;">i–caojnter</div>
<div class="t" style="left:325.2px;top:1444.5px;font-size:25px;color:#79879c;letter-spacing:-0.10px;transform:scaleX(0.900);transform-origin:0 0;">192.168.0.11</div>
<div class="t" style="left:1163.5px;top:1400.5px;font-size:28px;color:#242e42;-webkit-text-stroke:0.56px #242e42;transform:scaleX(1.073);transform-origin:0 0;">24%</div>
<div class="t" style="left:1162.6px;top:1444.0px;font-size:25px;color:#79879c;letter-spacing:0.49px;">1.88 / 8.00 core</div>
<div class="t" style="left:1429.7px;top:1421.9px;font-size:28px;color:#242e42;-webkit-text-stroke:0.56px #242e42;letter-spacing:1.20px;">0.63</div>
<div class="t" style="left:1677.2px;top:1400.5px;font-size:28px;color:#242e42;-webkit-text-stroke:0.56px #242e42;transform:scaleX(1.078);transform-origin:0 0;">68%</div>
<div class="t" style="left:1677.3px;top:1444.0px;font-size:25px;color:#79879c;letter-spacing:-0.04px;">7.93 / 11.73 GiB</div>
<div class="t" style="left:1935.4px;top:1400.5px;font-size:28px;color:#242e42;-webkit-text-stroke:0.56px #242e42;transform:scaleX(1.075);transform-origin:0 0;">84%</div>
<div class="t" style="left:1935.5px;top:1444.0px;font-size:25px;color:#79879c;letter-spacing:0.26px;">44.03 / 52.71 GB</div>
<div class="t" style="left:2208.9px;top:1400.5px;font-size:28px;color:#242e42;-webkit-text-stroke:0.56px #242e42;transform:scaleX(1.085);transform-origin:0 0;">35%</div>
<div class="t" style="left:2208.0px;top:1444.0px;font-size:25px;color:#79879c;letter-spacing:-0.05px;">1141190 / 3276800</div>
<div class="t" style="left:2508.9px;top:1400.5px;font-size:28px;color:#242e42;-webkit-text-stroke:0.56px #242e42;transform:scaleX(1.085);transform-origin:0 0;">60%</div>
<div class="t" style="left:2509.0px;top:1444.0px;font-size:25px;color:#79879c;letter-spacing:0.37px;">65 / 110</div>
<div style="position:absolute;left:126px;top:1498px;width:2592px;height:106px;background:#fff;border-radius:8px"></div>
<div style="position:absolute;left:1124px;top:1498px;width:266px;height:106px;background:#dfeee4"></div>
<svg style="position:absolute;left:176px;top:1520px;" width="60" height="60" viewBox="0 0 60 60"><rect x="26.8" y="0" width="6.4" height="60" fill="#b6c2cd"/><rect x="0.1" y="6.8" width="59.7" height="19.8" rx="3" fill="#36435c"/><rect x="0.1" y="33.2" width="59.7" height="19.7" rx="3" fill="#36435c"/><rect x="2.9" y="9.9" width="7.2" height="6.9" fill="#fff"/><rect x="12.9" y="9.9" width="7.2" height="6.9" fill="#fff"/><rect x="2.9" y="36.6" width="7.2" height="6.9" fill="#fff"/><rect x="12.9" y="36.6" width="7.2" height="6.9" fill="#fff"/></svg>
<div class="t" style="left:326.8px;top:1516.2px;font-size:28px;color:#36435c;-webkit-text-stroke:0.90px #36435c;letter-spacing:0.74px;">i–16x6bgj8</div>
<div class="t" style="left:325.2px;top:1560.5px;font-size:25px;color:#79879c;letter-spacing:0.43px;transform:scaleX(0.900);transform-origin:0 0;">192.168.0.14</div>
<div class="t" style="left:1162.6px;top:1516.5px;font-size:28px;color:#242e42;-webkit-text-stroke:0.56px #242e42;transform:scaleX(0.989);transform-origin:0 0;">12%</div>
<div class="t" style="left:1163.6px;top:1560.0px;font-size:25px;color:#79879c;letter-spacing:0.73px;">0.93 / 8.00 core</div>
<div class="t" style="left:1429.7px;top:1537.9px;font-size:28px;color:#242e42;-webkit-text-stroke:0.56px #242e42;letter-spacing:-0.57px;">0.14</div>
<div class="t" style="left:1677.3px;top:1516.5px;font-size:28px;color:#242e42;-webkit-text-stroke:0.56px #242e42;transform:scaleX(1.049);transform-origin:0 0;">70%</div>
<div class="t" style="left:1677.3px;top:1560.0px;font-size:25px;color:#79879c;letter-spacing:-0.49px;">8.11 / 11.73 GiB</div>
<div class="t" style="left:1935.4px;top:1516.5px;font-size:28px;color:#242e42;-webkit-text-stroke:0.56px #242e42;transform:scaleX(1.075);transform-origin:0 0;">84%</div>
<div class="t" style="left:1935.5px;top:1560.0px;font-size:25px;color:#79879c;letter-spacing:0.26px;">43.89 / 52.71 GB</div>
<div class="t" style="left:2209.0px;top:1516.5px;font-size:28px;color:#242e42;-webkit-text-stroke:0.56px #242e42;transform:scaleX(0.980);transform-origin:0 0;">31%</div>
<div class="t" style="left:2208.0px;top:1560.0px;font-size:25px;color:#79879c;letter-spacing:0.28px;">1002451 / 3276800</div>
<div class="t" style="left:2508.9px;top:1516.5px;font-size:28px;color:#242e42;-webkit-text-stroke:0.56px #242e42;transform:scaleX(1.085);transform-origin:0 0;">66%</div>
<div class="t" style="left:2509.0px;top:1560.0px;font-size:25px;color:#79879c;letter-spacing:0.11px;">72 / 110</div>
<div style="position:absolute;left:2760px;top:1376px;width:72px;height:72px;border-radius:50%;background:linear-gradient(180deg,#529ecd,#4a8dbb)"></div>
<svg style="position:absolute;left:2750px;top:1366px;" width="90" height="90" viewBox="0 0 1440 1440"><path d="M685,685 L765,725 L570,1090 L478,1025 Z" fill="#eef4f9"/><path d="M525,520 C600,470 720,440 830,480 C870,500 890,530 920,560 L1020,610 L960,705 L860,660 C830,650 800,670 780,700 L765,725 L685,685 L700,630 C710,560 650,520 525,520 Z" fill="#94c2dd"/></svg>
</body></html>
